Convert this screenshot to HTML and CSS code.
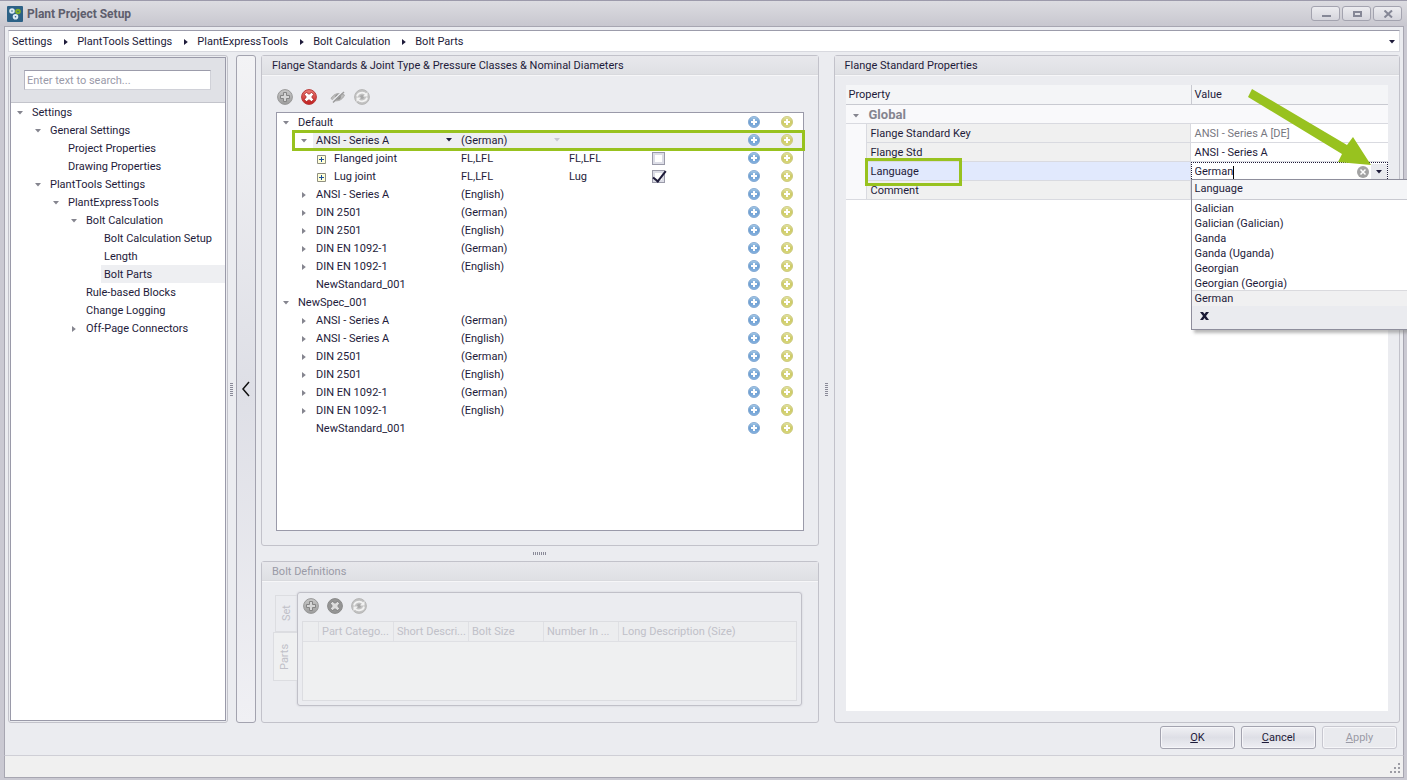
FILE: index.html
```html
<!DOCTYPE html>
<html lang="en">
<head>
<meta charset="utf-8">
<title>Plant Project Setup</title>
<link rel="stylesheet" href="styles.css">
</head>
<body>
<svg class="defs" aria-hidden="true">
  <defs>
    <linearGradient id="g-blue" x1="0" y1="0" x2="0" y2="1"><stop offset="0" stop-color="#a9cbe8"/><stop offset=".5" stop-color="#6d9fd2"/><stop offset="1" stop-color="#86b2e0"/></linearGradient>
    <linearGradient id="g-yellow" x1="0" y1="0" x2="0" y2="1"><stop offset="0" stop-color="#e4e4a6"/><stop offset=".5" stop-color="#cdca66"/><stop offset="1" stop-color="#dad87c"/></linearGradient>
    <linearGradient id="g-red" x1="0" y1="0" x2="0" y2="1"><stop offset="0" stop-color="#ee8078"/><stop offset="1" stop-color="#c01c1c"/></linearGradient>
    <linearGradient id="g-gray" x1="0" y1="0" x2="0" y2="1"><stop offset="0" stop-color="#c8c8c8"/><stop offset="1" stop-color="#9c9c9c"/></linearGradient>
    <symbol id="i-blue" viewBox="0 0 12 12"><circle cx="6" cy="6" r="5.600" fill="url(#g-blue)" stroke="#7ea5cf" stroke-width=".8"/><path d="M6 3v6M3 6h6" stroke="#fff" stroke-width="2"/></symbol>
    <symbol id="i-yellow" viewBox="0 0 12 12"><circle cx="6" cy="6" r="5.600" fill="url(#g-yellow)" stroke="#c8c57a" stroke-width=".8"/><path d="M6 3v6M3 6h6" stroke="#fff" stroke-width="2"/></symbol>
    <symbol id="i-add" viewBox="0 0 16 16"><circle cx="8" cy="8" r="7.400" fill="url(#g-gray)" stroke="#989898"/><path d="M6.500 3.500h3v3h3v3h-3v3h-3v-3h-3v-3h3z" fill="#d6d6d6" stroke="#858585"/></symbol>
    <symbol id="i-del" viewBox="0 0 16 16"><circle cx="8" cy="8" r="7.400" fill="url(#g-red)" stroke="#b83a3a"/><path d="M5.400 3.400 8 5.300l2.600-1.900 2 2L10.700 8l1.900 2.600-2 2L8 10.700l-2.600 1.900-2-2L5.300 8 3.400 5.400z" fill="#fff" stroke="#a01818" stroke-width=".7"/></symbol>
    <symbol id="i-delgray" viewBox="0 0 16 16"><circle cx="8" cy="8" r="7.400" fill="#959595" stroke="#8a8a8a"/><path d="M5.400 3.400 8 5.300l2.600-1.900 2 2L10.700 8l1.900 2.600-2 2L8 10.700l-2.600 1.900-2-2L5.300 8 3.400 5.400z" fill="#dcdcdc" stroke="#747474" stroke-width=".7"/></symbol>
    <symbol id="i-eye" viewBox="0 0 16 16"><path d="M1 9.500C3.500 4.500 10 3 14.500 6 12.500 11.500 5.500 14 1 9.500z" fill="#bcbcbc" stroke="#acacac"/><circle cx="8" cy="8" r="2.800" fill="#8e8e8e"/><path d="M2.500 12 13 2" stroke="#ebecf0" stroke-width="1.500"/><path d="M3 13.500 14 3" stroke="#9c9c9c" stroke-width="1.500"/></symbol>
    <symbol id="i-refresh" viewBox="0 0 16 16"><circle cx="8" cy="8" r="7.400" fill="#c2c2c2" stroke="#b6b6b6"/><circle cx="8" cy="8" r="2" fill="#a8a8a8"/><path d="M3 7.500a5 4.500 0 0 1 9-2M13 8.500a5 4.500 0 0 1-9 2" fill="none" stroke="#f2f2f2" stroke-width="1.800"/><path d="M13.500 3v4.500H9zM2.500 13V8.500H7z" fill="#f2f2f2"/></symbol>
    <symbol id="i-clear" viewBox="0 0 12 12"><circle cx="6" cy="6" r="6" fill="#a3a3a3"/><path d="m3.500 3.500 5 5m0-5-5 5" stroke="#fff" stroke-width="1.500"/></symbol>
    <symbol id="i-down" viewBox="0 0 6 4"><path d="M0 0h6L3 3.600z" fill="currentColor"/></symbol>
    <symbol id="i-right" viewBox="0 0 4 6"><path d="M0 0v6l3.800-3z" fill="currentColor"/></symbol>
    <symbol id="i-box" viewBox="0 0 9 9"><path d="M.5.5h8v8h-8z" fill="#ffffd8" stroke="#8f8f80"/><path d="M2 4.500h5M4.500 2v5" stroke="#1c4f9c"/></symbol>
  </defs>
</svg>

<div class="window">
  <header class="titlebar">
    <svg class="logo" viewBox="0 0 16 16"><rect width="16" height="16" rx="1" fill="#2c6186"/><g fill="none" stroke-width="2"><circle cx="5" cy="5" r="1.800" stroke="#dceaf4"/><circle cx="11" cy="5.500" r="1.800" stroke="#7fae28"/><circle cx="8.500" cy="10.800" r="1.800" stroke="#dceaf4"/></g></svg>
    <h1>Plant Project Setup</h1>
    <div class="winbtns">
      <button aria-label="Minimize"><svg viewBox="0 0 10 8"><path d="M1 6h9" stroke="#858796" stroke-width="2"/></svg></button>
      <button aria-label="Maximize"><svg viewBox="0 0 10 8"><path d="M2 2h7v4H2z" fill="none" stroke="#858796" stroke-width="2"/></svg></button>
      <button aria-label="Close"><svg viewBox="0 0 10 8"><path d="m1.500.5 7.500 7M9 .5l-7.500 7" stroke="#858796" stroke-width="2"/></svg></button>
    </div>
  </header>

  <main class="content">
    <nav class="crumbs" aria-label="Path">
      <a href="#">Settings</a><svg class="right dark"><use href="#i-right"/></svg>
      <a href="#">PlantTools Settings</a><svg class="right dark"><use href="#i-right"/></svg>
      <a href="#">PlantExpressTools</a><svg class="right dark"><use href="#i-right"/></svg>
      <a href="#">Bolt Calculation</a><svg class="right dark"><use href="#i-right"/></svg>
      <a href="#">Bolt Parts</a>
      <button class="crumb-more" aria-label="History"><svg class="down dark"><use href="#i-down"/></svg></button>
    </nav>

    <div class="panes">
      <aside class="panel sidebar">
        <div class="side-inner">
          <div class="search"><input type="text" aria-label="Search" placeholder="Enter text to search..."></div>
          <ul class="nav">
            <li class="l0"><svg class="down"><use href="#i-down"/></svg><a href="#">Settings</a></li>
            <li class="l1"><svg class="down"><use href="#i-down"/></svg><a href="#">General Settings</a></li>
            <li class="l2"><i></i><a href="#">Project Properties</a></li>
            <li class="l2"><i></i><a href="#">Drawing Properties</a></li>
            <li class="l1"><svg class="down"><use href="#i-down"/></svg><a href="#">PlantTools Settings</a></li>
            <li class="l2"><svg class="down"><use href="#i-down"/></svg><a href="#">PlantExpressTools</a></li>
            <li class="l3"><svg class="down"><use href="#i-down"/></svg><a href="#">Bolt Calculation</a></li>
            <li class="l4"><i></i><a href="#">Bolt Calculation Setup</a></li>
            <li class="l4"><i></i><a href="#">Length</a></li>
            <li class="l4"><i></i><a href="#" class="current">Bolt Parts</a></li>
            <li class="l3"><i></i><a href="#">Rule-based Blocks</a></li>
            <li class="l3"><i></i><a href="#">Change Logging</a></li>
            <li class="l3"><svg class="right"><use href="#i-right"/></svg><a href="#">Off-Page Connectors</a></li>
          </ul>
        </div>
      </aside>

      <div class="split-v side-split"><span class="grip"></span></div>
      <button class="collapse" aria-label="Collapse"><svg viewBox="0 0 8 16"><path d="M7 1 1 8l6 7" fill="none" stroke="#111" stroke-width="1.500"/></svg></button>

      <div class="middle">
        <section class="panel standards">
          <h2>Flange Standards &amp; Joint Type &amp; Pressure Classes &amp; Nominal Diameters</h2>
          <div class="standards-body">
            <div class="tools">
              <button aria-label="Add"><svg><use href="#i-add"/></svg></button>
              <button aria-label="Delete"><svg><use href="#i-del"/></svg></button>
              <button class="spaced" aria-label="Hide" disabled><svg><use href="#i-eye"/></svg></button>
              <button aria-label="Refresh" disabled><svg><use href="#i-refresh"/></svg></button>
            </div>
            <div class="tree-box">
              <table class="tree">
                <colgroup><col class="c-name"><col class="c-lang"><col class="c-type"><col class="c-check"><col><col class="c-add"><col class="c-add"></colgroup>
                <tbody>
                <tr><td class="t0"><svg class="down"><use href="#i-down"/></svg>Default</td><td></td><td></td><td></td><td></td><td><svg class="plus"><use href="#i-blue"/></svg></td><td><svg class="plus"><use href="#i-yellow"/></svg></td></tr>
                <tr class="selected"><td class="t1"><svg class="down"><use href="#i-down"/></svg>ANSI - Series A<svg class="down dark drop"><use href="#i-down"/></svg><span class="mark mark-row"></span></td><td>(German)<svg class="down faint drop"><use href="#i-down"/></svg></td><td></td><td></td><td></td><td><svg class="plus"><use href="#i-blue"/></svg></td><td><svg class="plus"><use href="#i-yellow"/></svg></td></tr>
                <tr><td class="t2"><svg class="box"><use href="#i-box"/></svg>Flanged joint</td><td>FL,LFL</td><td>FL,LFL</td><td><input type="checkbox" aria-label="Flanged joint"></td><td></td><td><svg class="plus"><use href="#i-blue"/></svg></td><td><svg class="plus"><use href="#i-yellow"/></svg></td></tr>
                <tr><td class="t2"><svg class="box"><use href="#i-box"/></svg>Lug joint</td><td>FL,LFL</td><td>Lug</td><td><input type="checkbox" aria-label="Lug joint" checked></td><td></td><td><svg class="plus"><use href="#i-blue"/></svg></td><td><svg class="plus"><use href="#i-yellow"/></svg></td></tr>
                <tr><td class="t1"><svg class="right"><use href="#i-right"/></svg>ANSI - Series A</td><td>(English)</td><td></td><td></td><td></td><td><svg class="plus"><use href="#i-blue"/></svg></td><td><svg class="plus"><use href="#i-yellow"/></svg></td></tr>
                <tr><td class="t1"><svg class="right"><use href="#i-right"/></svg>DIN 2501</td><td>(German)</td><td></td><td></td><td></td><td><svg class="plus"><use href="#i-blue"/></svg></td><td><svg class="plus"><use href="#i-yellow"/></svg></td></tr>
                <tr><td class="t1"><svg class="right"><use href="#i-right"/></svg>DIN 2501</td><td>(English)</td><td></td><td></td><td></td><td><svg class="plus"><use href="#i-blue"/></svg></td><td><svg class="plus"><use href="#i-yellow"/></svg></td></tr>
                <tr><td class="t1"><svg class="right"><use href="#i-right"/></svg>DIN EN 1092-1</td><td>(German)</td><td></td><td></td><td></td><td><svg class="plus"><use href="#i-blue"/></svg></td><td><svg class="plus"><use href="#i-yellow"/></svg></td></tr>
                <tr><td class="t1"><svg class="right"><use href="#i-right"/></svg>DIN EN 1092-1</td><td>(English)</td><td></td><td></td><td></td><td><svg class="plus"><use href="#i-blue"/></svg></td><td><svg class="plus"><use href="#i-yellow"/></svg></td></tr>
                <tr><td class="t1"><i></i>NewStandard_001</td><td></td><td></td><td></td><td></td><td><svg class="plus"><use href="#i-blue"/></svg></td><td><svg class="plus"><use href="#i-yellow"/></svg></td></tr>
                <tr><td class="t0"><svg class="down"><use href="#i-down"/></svg>NewSpec_001</td><td></td><td></td><td></td><td></td><td><svg class="plus"><use href="#i-blue"/></svg></td><td><svg class="plus"><use href="#i-yellow"/></svg></td></tr>
                <tr><td class="t1"><svg class="right"><use href="#i-right"/></svg>ANSI - Series A</td><td>(German)</td><td></td><td></td><td></td><td><svg class="plus"><use href="#i-blue"/></svg></td><td><svg class="plus"><use href="#i-yellow"/></svg></td></tr>
                <tr><td class="t1"><svg class="right"><use href="#i-right"/></svg>ANSI - Series A</td><td>(English)</td><td></td><td></td><td></td><td><svg class="plus"><use href="#i-blue"/></svg></td><td><svg class="plus"><use href="#i-yellow"/></svg></td></tr>
                <tr><td class="t1"><svg class="right"><use href="#i-right"/></svg>DIN 2501</td><td>(German)</td><td></td><td></td><td></td><td><svg class="plus"><use href="#i-blue"/></svg></td><td><svg class="plus"><use href="#i-yellow"/></svg></td></tr>
                <tr><td class="t1"><svg class="right"><use href="#i-right"/></svg>DIN 2501</td><td>(English)</td><td></td><td></td><td></td><td><svg class="plus"><use href="#i-blue"/></svg></td><td><svg class="plus"><use href="#i-yellow"/></svg></td></tr>
                <tr><td class="t1"><svg class="right"><use href="#i-right"/></svg>DIN EN 1092-1</td><td>(German)</td><td></td><td></td><td></td><td><svg class="plus"><use href="#i-blue"/></svg></td><td><svg class="plus"><use href="#i-yellow"/></svg></td></tr>
                <tr><td class="t1"><svg class="right"><use href="#i-right"/></svg>DIN EN 1092-1</td><td>(English)</td><td></td><td></td><td></td><td><svg class="plus"><use href="#i-blue"/></svg></td><td><svg class="plus"><use href="#i-yellow"/></svg></td></tr>
                <tr><td class="t1"><i></i>NewStandard_001</td><td></td><td></td><td></td><td></td><td><svg class="plus"><use href="#i-blue"/></svg></td><td><svg class="plus"><use href="#i-yellow"/></svg></td></tr>
                </tbody>
              </table>
            </div>
          </div>
        </section>

        <div class="split-h"><span class="grip"></span></div>

        <section class="panel bolts">
          <h2>Bolt Definitions</h2>
          <div class="bolts-body">
            <div class="tabs">
              <button class="tab" disabled>Set</button>
              <button class="tab active" disabled>Parts</button>
            </div>
            <div class="tab-page">
              <div class="tools">
                <button aria-label="Add" disabled><svg><use href="#i-add"/></svg></button>
                <button aria-label="Delete" disabled><svg><use href="#i-delgray"/></svg></button>
                <button aria-label="Refresh" disabled><svg><use href="#i-refresh"/></svg></button>
              </div>
              <div class="parts-box">
                <table class="parts">
                  <colgroup><col class="p-ind"><col class="p-col"><col class="p-col"><col class="p-col"><col class="p-col"><col></colgroup>
                  <thead><tr><th></th><th>Part Catego...</th><th>Short Descri...</th><th>Bolt Size</th><th>Number In ...</th><th>Long Description (Size)</th></tr></thead>
                </table>
              </div>
            </div>
          </div>
        </section>
      </div>

      <div class="split-v mid-split"><span class="grip"></span></div>

      <section class="panel props">
        <h2>Flange Standard Properties</h2>
        <div class="props-body">
          <table class="grid">
            <colgroup><col class="g-ind"><col class="g-name"><col></colgroup>
            <thead><tr><th colspan="2">Property</th><th>Value</th></tr></thead>
            <tbody>
              <tr class="group"><td colspan="3"><svg class="down"><use href="#i-down"/></svg>Global</td></tr>
              <tr><td class="ind"></td><th>Flange Standard Key</th><td class="readonly">ANSI - Series A [DE]</td></tr>
              <tr><td class="ind"></td><th>Flange Std</th><td>ANSI - Series A</td></tr>
              <tr class="active"><td class="ind"></td><th><label for="lang">Language</label><span class="mark mark-lang"></span></th>
                <td class="edit">
                  <div class="combo"><span class="field"><input id="lang" type="text" value="German"><span class="caret"></span></span><button aria-label="Clear"><svg class="clear"><use href="#i-clear"/></svg></button><button class="open" aria-label="Open list"><svg class="down dark"><use href="#i-down"/></svg></button></div>
                  <div class="popup">
                    <div class="popup-head">Language</div>
                    <ul>
                      <li>Galician</li><li>Galician (Galician)</li><li>Ganda</li><li>Ganda (Uganda)</li><li>Georgian</li><li>Georgian (Georgia)</li><li class="on">German</li>
                    </ul>
                    <div class="popup-foot"><button aria-label="Close list"><svg viewBox="0 0 9 8"><path d="M0 0h3l1.500 2L6 0h3L6 4l3 4H6L4.500 6 3 8H0l3-4z" fill="#1a1a35"/></svg></button></div>
                  </div>
                </td></tr>
              <tr><td class="ind"></td><th>Comment</th><td></td></tr>
            </tbody>
          </table>
          <svg class="arrow" viewBox="0 0 124 78"><path d="M4 0 99 56l6-8 18 28-33-3 4-8L0 8z" fill="#98c21f"/></svg>
        </div>
      </section>
    </div>

    <div class="actions">
      <button><u>O</u>K</button>
      <button><u>C</u>ancel</button>
      <button disabled><u>A</u>pply</button>
    </div>
  </main>

  <footer class="status"><svg viewBox="0 0 11 11"><path d="M8 0h2v2H8zM4 4h2v2H4zM8 4h2v2H8zM0 8h2v2H0zM4 8h2v2H4zM8 8h2v2H8z" fill="#9c9ca4"/></svg></footer>
</div>
</body>
</html>
```

FILE: styles.css
```css
* { box-sizing: border-box; }

html, body { height: 100%; }

body {
  margin: 0;
  overflow: hidden;
  font: 11px/14px Roboto, "Noto Sans", sans-serif;
  color: #1e1b3a;
}

h1, h2, ul { margin: 0; padding: 0; }
ul { list-style: none; }
a { color: inherit; text-decoration: none; }
button, input { font: inherit; color: inherit; }
button { padding: 0; border: 0; background: none; }
svg { display: block; flex: none; }
table { border-collapse: separate; border-spacing: 0; table-layout: fixed; width: 100%; }
th, td { padding: 0; font-weight: normal; text-align: left; white-space: nowrap; }
.defs { position: absolute; width: 0; height: 0; }

.down { width: 6px; height: 4px; color: #85858f; }
.right { width: 4px; height: 6px; color: #85858f; }
.dark { color: #1e1b3a; }
.faint { color: #c8c8d0; }

/* window frame */
.window {
  height: 100%;
  display: flex;
  flex-direction: column;
  padding: 0 3px 2px 4px;
  border-top: 1px solid #9c9aab;
  background: #cac9d2;
  overflow: hidden;
}
.titlebar {
  flex: none;
  height: 25px;
  display: flex;
  align-items: center;
  gap: 4px;
  margin: 0 -3px 0 -4px;
  padding: 0 5px 0 7px;
  background: linear-gradient(#dcdce1, #c8c7cf);
}
.titlebar h1 { flex: 1; font-size: 12px; line-height: 16px; font-weight: bold; color: #5e5e6d; }
.logo { width: 16px; height: 16px; }
.winbtns { display: flex; gap: 2px; }
.winbtns button {
  width: 29px;
  height: 15px;
  display: flex;
  align-items: center;
  justify-content: center;
  border: 1px solid #a3a3af;
  border-radius: 3px;
  background: linear-gradient(#ececf0, #d5d5dc);
}
.winbtns svg { width: 10px; height: 8px; }

.content {
  flex: 1;
  min-height: 0;
  display: flex;
  flex-direction: column;
  padding: 3px 3px 6px 3px;
  border: 1px solid #a7a6b1;
  border-bottom: 0;
  background: #ebecf0;
}

.crumbs {
  flex: none;
  height: 22px;
  display: flex;
  align-items: center;
  padding: 1px 4px 0 3px;
  border: 1px solid #d8d9df;
  border-top-color: #9c9cab;
  background: #fff;
}
.crumbs .right { margin: 0 9px 0 12px; }
.crumb-more { margin-left: auto; }

.panes { flex: 1; min-height: 0; display: flex; margin-top: 3px; }
.panel {
  display: flex;
  flex-direction: column;
  border: 1px solid #c2c2ca;
  border-radius: 3px;
}
.panel h2 {
  flex: none;
  height: 19px;
  padding: 3px 10px 1px;
  font-size: 11px;
  line-height: 14px;
  font-weight: normal;
  background: linear-gradient(#e8e8ec, #dfe0e4);
  border-bottom: 1px solid #d9dade;
  box-shadow: 0 1px #f6f6f8;
}

/* sidebar */
.sidebar { flex: none; width: 220px; padding: 1px; }
.side-inner { flex: 1; border: 1px solid #9a9aa9; background: #fff; }
.search { height: 45px; padding: 12px 14px 0 13px; background: #e0e1e6; border-bottom: 1px solid #c3c4cb; }
.search input {
  display: block;
  width: 100%;
  height: 20px;
  padding: 0 2px;
  border: 1px solid #d0d1d8;
  border-top-color: #9c9cab;
  border-left-color: #b4b4c0;
  background: #fff;
}
.search input::placeholder { color: #9a9aa9; opacity: 1; }
.nav li { display: flex; align-items: center; height: 18px; }
.nav svg, .nav i { margin-right: 6px; }
.nav svg { margin-top: 2px; }
.nav svg.right { margin: 1px 7px 0 1px; }
.nav i { width: 6px; }
.nav a { flex: 1; padding: 3px 3px 1px; }
.nav .current { background: #eeeff2; }
.l0 { padding-left: 6px; }
.l1 { padding-left: 24px; }
.l2 { padding-left: 42px; }
.l3 { padding-left: 60px; }
.l4 { padding-left: 78px; }

/* splitters */
.split-v { flex: none; display: flex; align-items: center; justify-content: center; }
.side-split { width: 8px; padding-right: 2px; }
.mid-split { width: 15px; }
.split-v .grip { width: 3px; height: 13px; background: repeating-linear-gradient(#8a8a98 0 1px, transparent 1px 2px); }
.split-h { flex: none; height: 15px; display: flex; align-items: center; justify-content: center; }
.split-h .grip { width: 13px; height: 3px; background: repeating-linear-gradient(90deg, #8a8a98 0 1px, transparent 1px 2px); }
.collapse {
  flex: none;
  width: 20px;
  display: flex;
  align-items: center;
  justify-content: center;
  border: 1px solid #a3a3af;
  border-radius: 3px;
  background: linear-gradient(#f3f3f5, #dedfe6 50%, #f0f0f4);
}
.collapse svg { width: 8px; height: 16px; }

.middle { flex: 558 1 0; min-width: 0; display: flex; flex-direction: column; margin-left: 5px; }
.props { flex: 565 1 0; min-width: 0; }

/* toolbars */
.tools { display: flex; gap: 8px; }
.tools svg { width: 16px; height: 16px; }
.tools .spaced { margin-left: 5px; }

/* standards tree */
.standards { flex: 1; min-height: 0; }
.standards-body { flex: 1; display: flex; flex-direction: column; gap: 7px; padding: 14px; }
.standards-body .tools { padding-left: 1px; }
.tree-box { flex: 1; border: 1px solid #9a9aa9; background: #fff; }
.c-name { width: 183px; }
.c-lang { width: 108px; }
.c-type { width: 73px; }
.c-check { width: 35px; }
.c-add { width: 33px; }
.tree tr { position: relative; }
.tree td { height: 18px; padding-left: 1px; vertical-align: middle; }
.tree td:nth-child(-n+3) { padding-top: 2px; }
.tree td svg, .tree td i, .tree input { display: inline-block; vertical-align: middle; }
.tree td i { width: 6px; }
.tree .t0 { padding-left: 6px; }
.tree .t1 { padding-left: 24px; }
.tree .t2 { padding-left: 40px; }
.tree td > svg:first-child, .tree td > i { margin-right: 9px; }
.tree .t1 > .right:first-child { margin: 0 10px 0 1px; }
.tree .t2 > .box:first-child { margin-right: 8px; }
.box { width: 9px; height: 9px; }
.tree td .drop, .tree td > .drop:first-child { float: right; margin: 4px 8px 0 0; }
.tree td > .plus:first-child { width: 12px; height: 12px; margin: 0 0 0 10px; }
.tree .selected td { background: #eeeff1; }
.tree .selected .t1 { background: linear-gradient(90deg, #fff 36px, #eeeff1 36px); }
.tree input {
  appearance: none;
  position: relative;
  width: 13px;
  height: 13px;
  margin: 0 0 0 10px;
  border: 1px solid #9a9aa9;
  background: #fff;
  box-shadow: inset 0 0 0 2px #dcdde6;
}
.tree input:checked::after {
  content: "";
  position: absolute;
  left: 3px;
  top: -3px;
  width: 5px;
  height: 12px;
  border: solid #1e1b3a;
  border-width: 0 2px 2px 0;
  transform: rotate(38deg);
}

.mark { position: absolute; z-index: 1; border: 3px solid #98c21f; }
.mark-row { left: 15px; right: -2px; top: -1px; height: 21px; }
.mark-lang { left: -2px; top: -4px; width: 97px; height: 28px; }

/* bolt definitions */
.bolts { flex: none; height: 162px; }
.bolts h2 { color: #9a9aa6; }
.bolts-body { flex: 1; display: flex; padding: 11px 16px 16px 11px; }
.tabs { flex: none; width: 24px; display: flex; flex-direction: column; align-items: flex-end; padding-top: 3px; }
.tab {
  width: 22px;
  height: 37px;
  padding: 0;
  writing-mode: vertical-rl;
  transform: rotate(180deg);
  border: 1px solid #dcdde1;
  border-left: 0;
  color: #c0c0c8;
}
.tab.active { width: 24px; height: 49px; padding-left: 2px; background: #eff0f1; }
.tab-page {
  flex: 1;
  min-width: 0;
  display: flex;
  flex-direction: column;
  gap: 7px;
  padding: 5px 4px 4px;
  border: 1px solid #c0c0c8;
  border-radius: 3px;
  box-shadow: 0 0 2px #c8c8d0;
}
.tab-page .tools { padding-left: 1px; }
.parts-box { flex: 1; border: 1px solid #dcdde1; background: #eff0f1; }
.p-ind { width: 16px; }
.p-col { width: 75px; }
.parts th {
  height: 20px;
  padding: 0 3px;
  border-right: 1px solid #dfe0e4;
  border-bottom: 1px solid #dfe0e4;
  background: #ecedef;
  color: #c0c0c8;
}
.parts th:last-child { border-right: 0; }

/* property grid */
.props-body { position: relative; flex: 1; margin: 10px 11px 11px; background: #fff; }
.g-ind { width: 20px; }
.g-name { width: 325px; }
.grid thead th { height: 20px; padding: 1px 3px 0; background: #f4f5f7; border-bottom: 1px solid #c9cad1; }
.grid thead th + th { border-left: 1px solid #c9cad1; }
.grid tbody td, .grid tbody th { height: 19px; padding: 2px 4px 0; border-bottom: 1px solid #d9dae0; }
.grid tbody th { position: relative; background: #f0f0f0; border-left: 1px solid #d9dae0; border-right: 1px solid #d9dae0; }
.grid tbody .ind { border-bottom-color: #f9f9fb; background: #f9f9fb; }
.grid tr:last-child .ind { border-bottom-color: #d9dae0; }
.grid .group td { padding-left: 7px; background: #f9f9fb; color: #85858f; font-size: 13px; font-weight: bold; }
.group svg { display: inline-block; vertical-align: middle; margin-right: 10px; }
.grid .readonly { color: #77777f; }
.grid .active th { background: #e1e9fd; }
.grid tbody .edit { position: relative; padding: 0; border: 0; }
.combo { display: flex; align-items: center; height: 19px; border: 1px dotted #1e1b3a; border-bottom: 0; background: #fff; }
.field { flex: 1; display: flex; align-items: center; min-width: 0; padding-left: 3px; }
.field input { field-sizing: content; padding: 0; border: 0; outline: 0; background: none; }
.caret { width: 1px; height: 13px; background: #000; }
.clear { width: 12px; height: 12px; }
.open { width: 16px; height: 17px; margin-left: 2px; display: flex; align-items: center; justify-content: center; background: #e9eaee; }
.popup {
  position: absolute;
  z-index: 2;
  left: 0;
  top: 17px;
  width: 240px;
  border: 1px solid #8e8e9c;
  background: #fff;
  box-shadow: 3px 3px 3px #8889;
}
.popup-head { height: 20px; padding: 2px 3px; background: #f4f5f7; border-bottom: 1px solid #c9cad1; }
.popup li { height: 15px; padding: 0 3px; line-height: 15px; }
.popup ul { padding-top: 1px; }
.popup .on { background: #f0f0f1; box-shadow: 0 -1px #dadade, 0 1px #dadade; }
.popup-foot { display: flex; align-items: flex-start; height: 23px; padding: 6px 8px; background: #eaebef; }
.popup-foot svg { width: 9px; height: 8px; }
.arrow { position: absolute; z-index: 3; top: 4px; right: 16px; width: 124px; height: 78px; }

/* dialog buttons */
.actions { flex: none; display: flex; justify-content: flex-end; gap: 6px; margin-top: 3px; padding-right: 3px; }
.actions button {
  width: 75px;
  height: 23px;
  border: 1px solid #a3a3af;
  border-radius: 3px;
  background: linear-gradient(#f0f0f4, #dedfe6 50%, #eeeef3);
  box-shadow: inset 0 0 0 1px #f6f6f9;
}
.actions button:disabled { color: #9a9aa6; border-color: #c8c8d0; background: #e9eaee; }

.status {
  flex: none;
  height: 23px;
  display: flex;
  justify-content: flex-end;
  align-items: flex-end;
  padding: 0 2px 3px;
  border: 1px solid #a7a6b1;
  border-top-color: #cfcfd6;
  background: #f0f0f0;
}
.status svg { width: 11px; height: 11px; }
```
